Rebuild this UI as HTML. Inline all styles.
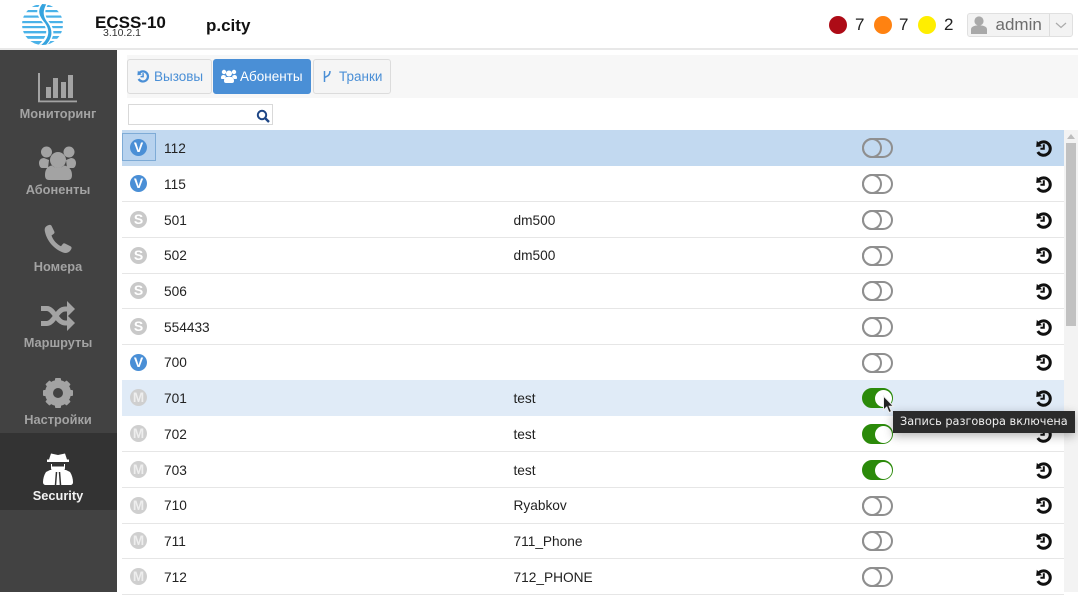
<!DOCTYPE html>
<html lang="ru"><head><meta charset="utf-8"><title>ECSS-10</title>
<style>
*{box-sizing:border-box}
html,body{margin:0;padding:0;width:1078px;height:592px;overflow:hidden;background:#fff;font-family:"Liberation Sans",sans-serif;color:#222}
.a{position:absolute}
#hdr{left:0;top:0;width:1078px;height:50px;background:#fff;border-bottom:2px solid #e8e8e8}
#side{left:0;top:50px;width:117px;height:542px;background:#424242}
.mi{position:absolute;left:-.5px;width:117px;text-align:center;font-weight:bold;font-size:12.8px;color:#a3a3a3}
.row{position:absolute;left:122px;width:942px;height:36px;border-bottom:1px solid #e6e6e6;font-size:13.7px;color:#222}
.n{position:absolute;left:42px;top:9.5px;line-height:17px}
.d{position:absolute;left:391.5px;top:9.5px;line-height:17px}
.b{position:absolute;left:8px;top:9px;width:17px;height:17px;border-radius:50%;text-align:center;font-weight:bold;font-size:14px;line-height:17px;color:#fff}
.V{background:#4a8fd6}.S{background:#c9c9c9}.M{background:#cfcfcf;font-size:13.5px;color:#eee}
.t{position:absolute;left:740px;top:8px;width:31px;height:20px;border-radius:10px;border:2px solid #8f8f8f;background:transparent}
.t i{position:absolute;left:-2px;top:-2px;width:20px;height:20px;border-radius:50%;border:2px solid #8f8f8f;background:transparent}
.t.on{background:#2b8a0a;border-color:#2b8a0a}
.t.on i{left:11px;top:-.5px;width:17px;height:17px;background:#fff;border:none}
.h{position:absolute;left:911px;top:8.5px;width:20px;height:18px;color:#111}
.tab{position:absolute;top:59px;height:35px;border:1px solid #dcdcdc;border-radius:3px;background:#f5f5f5;color:#4a8fd6;font-size:13.5px;line-height:33px;white-space:nowrap}
svg{display:block}
</style></head><body>
<svg width="0" height="0" style="position:absolute"><defs>
<symbol id="hist" viewBox="0 0 20 18"><path d="M3.800 1.800 3.200 8 9 7.200Z" fill="currentColor"/><path d="M5.500 5.200A6.700 6.700 0 1 1 4.800 13" fill="none" stroke="currentColor" stroke-width="3"/><path d="M10.800 5.200V9.800H7.400" fill="none" stroke="currentColor" stroke-width="2"/></symbol>
</defs></svg>

<div id="hdr" class="a">
<svg class="a" style="left:21px;top:3px" width="44" height="44" viewBox="0 0 44 44">
<defs><clipPath id="c"><circle cx="21.500" cy="21.500" r="20.500"/></clipPath></defs>
<g clip-path="url(#c)"><g fill="#4ab2e8">
<rect x="0" y="2" width="44" height="2"/><rect x="0" y="7" width="44" height="2.200"/><rect x="0" y="12.500" width="44" height="2.200"/><rect x="0" y="18" width="44" height="2.200"/><rect x="0" y="23" width="44" height="2.200"/><rect x="0" y="28" width="44" height="2.400"/><rect x="0" y="33" width="44" height="2.800"/><rect x="0" y="38" width="44" height="5"/></g>
<path d="M20 0C13 8 17 14 22 20C27 27 27 34 16 43L25 43C34 35 34 27 29 20C24 14 22 8 28 0Z" fill="#fff"/>
<path d="M22 0C15 8 19 14 24 20C29 27 29 35 19 43L24 43C32 35 32 27 27 20C22 14 21 8 26 0Z" fill="#35a3de"/></g></svg>
<div class="a" style="left:95px;top:13px;font-size:17px;font-weight:bold;color:#111;line-height:20px">ECSS-10</div>
<div class="a" style="left:103px;top:27px;font-size:10.500px;color:#333;line-height:12px">3.10.2.1</div>
<div class="a" style="left:206px;top:16px;font-size:17px;font-weight:bold;color:#111;line-height:20px">p.city</div>
<div class="a" style="left:829px;top:16px;width:18px;height:18px;border-radius:50%;background:#ad0b16"></div>
<div class="a" style="left:855px;top:15px;font-size:17px;line-height:20px;color:#222">7</div>
<div class="a" style="left:873.500px;top:16px;width:18px;height:18px;border-radius:50%;background:#ff8211"></div>
<div class="a" style="left:899px;top:15px;font-size:17px;line-height:20px;color:#222">7</div>
<div class="a" style="left:917.500px;top:16px;width:18px;height:18px;border-radius:50%;background:#ffee00"></div>
<div class="a" style="left:944px;top:15px;font-size:17px;line-height:20px;color:#222">2</div>
<div class="a" style="left:967px;top:13px;width:106px;height:24px;background:#f3f3f3;border:1px solid #e0e0e0;border-radius:3px"></div>
<div class="a" style="left:1049px;top:14px;width:1px;height:22px;background:#ddd"></div>
<svg class="a" style="left:970px;top:15px" width="18" height="20" viewBox="0 0 18 20"><circle cx="9" cy="6" r="4.600" fill="#a9a9a9"/><path d="M1 19V14.500C1 12 3.500 11 6 10.500H12C14.500 11 17 12 17 14.500V19Z" fill="#a9a9a9"/></svg>
<div class="a" style="left:995.500px;top:15px;font-size:17px;line-height:20px;color:#6d6d6d">admin</div>
<svg class="a" style="left:1055px;top:22px" width="12" height="7" viewBox="0 0 12 7"><path d="M1 1 6 5.500 11 1" fill="none" stroke="#aaa" stroke-width="1.200"/></svg>
</div>

<div id="side" class="a">
<div class="a" style="left:0;top:383px;width:117px;height:77px;background:#333"></div>
</div>
<svg class="a" style="left:36px;top:71px" width="44" height="33" viewBox="0 0 44 33"><g fill="#a3a3a3"><rect x="2" y="2" width="2" height="29"/><rect x="2" y="29.500" width="39" height="1.800"/><rect x="10" y="16" width="5" height="11"/><rect x="17" y="7" width="5" height="20"/><rect x="25" y="11" width="5" height="16"/><rect x="32" y="4" width="5" height="23"/></g></svg>
<div class="mi" style="top:105.500px;line-height:16px">Мониторинг</div>
<svg class="a" style="left:38px;top:146px" width="40" height="36" viewBox="0 0 40 36"><g fill="#a3a3a3"><circle cx="8.500" cy="6" r="5.500"/><circle cx="31" cy="6" r="5.500"/><path d="M1 17C1 14 3 12 6 12L11 14 10 22H4C2 22 1 19 1 17ZM38 17C38 14 36 12 33 12L28 14 29 22H35C37 22 38 19 38 17Z"/><circle cx="20" cy="14" r="8"/><path d="M7 29C7 23 10 20 14 19.500C17 22.500 23 22.500 26 19.500C30 20 34 23 34 29C34 32 33 34 30 34H11C8 34 7 32 7 29Z"/></g></svg>
<div class="mi" style="top:182px;line-height:16px">Абоненты</div>
<svg class="a" style="left:42px;top:224px" width="32" height="30" viewBox="0 0 32 30"><path d="M7 1C3.500 2 2 4 3 8C5 17 12 25 21 28.500C25 30 28 28 29.500 24.500C29.800 23.500 29.500 23 28.500 22.300L23 19.500C22 19 21.500 19.200 20.800 20L19 22.300C14.500 20 11 16 9.500 11.500L11.800 9.800C12.500 9 12.700 8.500 12.300 7.500L9.500 1.800C9 1 8 .7 7 1Z" fill="#a3a3a3"/></svg>
<div class="mi" style="top:259px;line-height:16px">Номера</div>
<svg class="a" style="left:40px;top:300px" width="36" height="32" viewBox="0 0 36 32"><g fill="none" stroke="#a3a3a3" stroke-width="5"><path d="M1 8.500H7C14 8.500 17 23 25 23H28"/><path d="M1 23.500H7C14 23.500 17 9 25 9H28"/></g><g fill="#a3a3a3"><path d="M27 1 35 9 27 17Z"/><path d="M27 15 35 23 27 31Z"/></g></svg>
<div class="mi" style="top:335px;line-height:16px">Маршруты</div>
<svg class="a" style="left:42px;top:377px" width="32" height="32" viewBox="0 0 32 32"><circle cx="16" cy="16" r="9" fill="none" stroke="#a3a3a3" stroke-width="8"/><g fill="#a3a3a3"><rect x="13" y="1" width="6" height="30" rx="1"/><rect x="13" y="1" width="6" height="30" rx="1" transform="rotate(45 16 16)"/><rect x="13" y="1" width="6" height="30" rx="1" transform="rotate(90 16 16)"/><rect x="13" y="1" width="6" height="30" rx="1" transform="rotate(135 16 16)"/></g><circle cx="16" cy="16" r="5" fill="#424242"/></svg>
<div class="mi" style="top:412px;line-height:16px">Настройки</div>
<svg class="a" style="left:43px;top:453px" width="30" height="33" viewBox="0 0 30 33"><g fill="#fff"><path d="M8 .5 15 2 22 .5 24 6.500H26V9H4V6.500H6Z"/><path d="M8 11H22V15C22 18 19 20 15 20C11 20 8 18 8 15Z"/><path d="M7 17H23L27 19C29 22 30 26 30 29C30 31 29 32 27 32H3C1 32 0 31 0 29C0 26 1 22 3 19Z"/></g><path d="M13.500 19 12.500 32M16.500 19 17.500 32" stroke="#333" stroke-width="1.500"/><rect x="9" y="11" width="12" height="2.500" fill="#333"/></svg>
<div class="mi" style="top:488px;line-height:16px;color:#f2f2f2">Security</div>

<div class="a" style="left:127px;top:55px;width:951px;height:43px;background:#f7f7f7"></div>
<div class="tab" style="left:127px;width:85px;padding-left:26px">Вызовы</div>
<svg class="a" style="left:135px;top:69px;color:#4a8fd6" width="15" height="14" viewBox="0 0 20 18"><use href="#hist"/></svg>
<div class="tab" style="left:213px;width:98px;background:#4a8fd6;border-color:#4a8fd6;color:#fff;padding-left:26px">Абоненты</div>
<svg class="a" style="left:221px;top:69px" width="16" height="14" viewBox="0 0 16 14"><g fill="#fff"><circle cx="3" cy="3" r="2.200"/><circle cx="13" cy="3" r="2.200"/><circle cx="8" cy="4.500" r="3"/><path d="M0 9C0 6.500 1 6 3 6L5 7 3.500 10H1C.5 10 0 9.700 0 9ZM16 9C16 6.500 15 6 13 6L11 7 12.500 10H15C15.500 10 16 9.700 16 9ZM3 12C3 9 4.500 8 6 8H10C11.500 8 13 9 13 12C13 13.500 12 14 11 14H5C4 14 3 13.500 3 12Z"/></g></svg>
<div class="tab" style="left:313px;width:78px;padding-left:25px">Транки</div>
<svg class="a" style="left:322px;top:70px" width="10" height="13" viewBox="0 0 10 13"><g fill="none" stroke="#4a8fd6" stroke-width="1.500"><path d="M2.500 1V12"/><path d="M8 1C8 5 6 6 2.500 7.500"/></g></svg>

<div class="a" style="left:128px;top:104px;width:145px;height:21px;border:1px solid #d9d9d9;background:#fff"></div>
<svg class="a" style="left:256px;top:109px" width="14" height="14" viewBox="0 0 14 14"><circle cx="6" cy="6" r="4.200" fill="none" stroke="#1d4585" stroke-width="2"/><path d="M9 9 13 13" stroke="#1d4585" stroke-width="2.400"/></svg>

<div class="row" style="top:130px;background:#c2d9f0;border:none"><div class="a" style="left:0;top:3px;width:34px;height:28px;background:#b7d2ee;border:1px solid #7eabd6"></div><span class="b V">V</span><span class="n">112</span><span class="t"><i></i></span><svg class="h"><use href="#hist"/></svg></div>
<div class="row" style="top:166px;height:36px"><span class="b V">V</span><span class="n">115</span><span class="t"><i></i></span><svg class="h"><use href="#hist"/></svg></div>
<div class="row" style="top:202px"><span class="b S">S</span><span class="n">501</span><span class="d">dm500</span><span class="t"><i></i></span><svg class="h"><use href="#hist"/></svg></div>
<div class="row" style="top:237.500px"><span class="b S">S</span><span class="n">502</span><span class="d">dm500</span><span class="t"><i></i></span><svg class="h"><use href="#hist"/></svg></div>
<div class="row" style="top:273px"><span class="b S">S</span><span class="n">506</span><span class="t"><i></i></span><svg class="h"><use href="#hist"/></svg></div>
<div class="row" style="top:309px"><span class="b S">S</span><span class="n">554433</span><span class="t"><i></i></span><svg class="h"><use href="#hist"/></svg></div>
<div class="row" style="top:344.500px;border:none"><span class="b V">V</span><span class="n">700</span><span class="t"><i></i></span><svg class="h"><use href="#hist"/></svg></div>
<div class="row" style="top:380px;background:#e0ebf7;border:none"><span class="b M">M</span><span class="n">701</span><span class="d">test</span><span class="t on"><i></i></span><svg class="h"><use href="#hist"/></svg></div>
<div class="row" style="top:416px"><span class="b M">M</span><span class="n">702</span><span class="d">test</span><span class="t on"><i></i></span><svg class="h"><use href="#hist"/></svg></div>
<div class="row" style="top:452px"><span class="b M">M</span><span class="n">703</span><span class="d">test</span><span class="t on"><i></i></span><svg class="h"><use href="#hist"/></svg></div>
<div class="row" style="top:487.500px"><span class="b M">M</span><span class="n">710</span><span class="d">Ryabkov</span><span class="t"><i></i></span><svg class="h"><use href="#hist"/></svg></div>
<div class="row" style="top:523px"><span class="b M">M</span><span class="n">711</span><span class="d">711_Phone</span><span class="t"><i></i></span><svg class="h"><use href="#hist"/></svg></div>
<div class="row" style="top:559px"><span class="b M">M</span><span class="n">712</span><span class="d">712_PHONE</span><span class="t"><i></i></span><svg class="h"><use href="#hist"/></svg></div>

<div class="a" style="left:1064px;top:130px;width:14px;height:462px;background:#f3f3f3"></div>
<div class="a" style="left:1066px;top:143px;width:10px;height:183px;background:#c1c1c1"></div>
<svg class="a" style="left:1067px;top:134px" width="8" height="5"><path d="M0 5 4 0 8 5Z" fill="#bdbdbd"/></svg>

<div class="a" style="left:893px;top:411px;width:182px;height:22px;background:#2b2b2b;color:#eee;font-family:'DejaVu Sans',sans-serif;font-size:11.300px;line-height:22px;padding-left:7px;white-space:nowrap;box-shadow:0 3px 10px rgba(0,0,0,.3)">Запись разговора включена</div>
<svg class="a" style="left:882px;top:395px" width="13" height="20" viewBox="0 0 13 20"><path d="M1.500 1V15L4.800 12 7 17.500 9.500 16.500 7.200 11.300H11.500Z" fill="#222" stroke="#eee" stroke-width="1"/></svg>
</body></html>
